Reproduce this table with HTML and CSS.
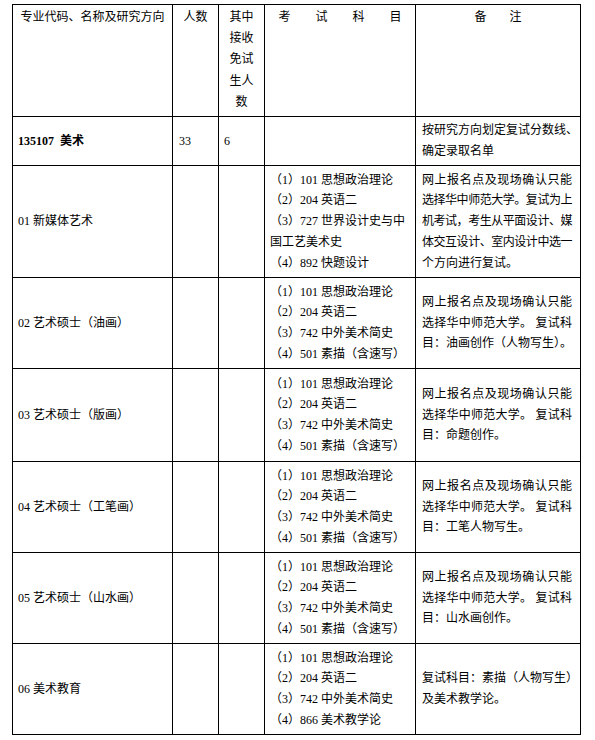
FILE: index.html
```html
<!DOCTYPE html>
<html lang="zh-CN">
<head>
<meta charset="utf-8">
<title>招生专业目录</title>
<link rel="stylesheet" href="styles.css">
</head>
<body>
<div class="tbl">
  <div class="c h"><span class="h1">专业代码、名称及研究方向</span></div>
  <div class="c h">人数</div>
  <div class="c h">其中<br>接收<br>免试<br>生人<br>数</div>
  <div class="c h"><span class="sp4">考试科目</span></div>
  <div class="c h"><span class="sp2">备注</span></div>

  <div class="c m p1"><b>135107&nbsp; 美术</b></div>
  <div class="c m p2">33</div>
  <div class="c m p3">6</div>
  <div class="c m p4"></div>
  <div class="c m p5"><div class="txt"><span class="ln nw">按研究方向划定复试分数线、</span><span class="ln">确定录取名单</span></div></div>

  <div class="c m p1">01 新媒体艺术</div>
  <div class="c m p2"></div>
  <div class="c m p3"></div>
  <div class="c m p4"><div>（1）101 思想政治理论<br>（2）204 英语二<br>（3）727 世界设计史与中<br>国工艺美术史<br>（4）892 快题设计</div></div>
  <div class="c m p5"><div class="txt"><span class="ln j">网上报名点及现场确认只能</span><span class="ln j t">选择华中师范大学。复试为上</span><span class="ln j t">机考试，考生从平面设计、媒</span><span class="ln j t">体交互设计、室内设计中选一</span><span class="ln">个方向进行复试。</span></div></div>

  <div class="c m p1">02 艺术硕士（油画）</div>
  <div class="c m p2"></div>
  <div class="c m p3"></div>
  <div class="c m p4"><div>（1）101 思想政治理论<br>（2）204 英语二<br>（3）742 中外美术简史<br>（4）501 素描（含速写）</div></div>
  <div class="c m p5"><div class="txt"><span class="ln j">网上报名点及现场确认只能</span><span class="ln j">选择华中师范大学。 复试科</span><span class="ln nw">目：油画创作（人物写生）。</span></div></div>

  <div class="c m p1">03 艺术硕士（版画）</div>
  <div class="c m p2"></div>
  <div class="c m p3"></div>
  <div class="c m p4"><div>（1）101 思想政治理论<br>（2）204 英语二<br>（3）742 中外美术简史<br>（4）501 素描（含速写）</div></div>
  <div class="c m p5"><div class="txt"><span class="ln j">网上报名点及现场确认只能</span><span class="ln j">选择华中师范大学。 复试科</span><span class="ln">目：命题创作。</span></div></div>

  <div class="c m p1">04 艺术硕士（工笔画）</div>
  <div class="c m p2"></div>
  <div class="c m p3"></div>
  <div class="c m p4"><div>（1）101 思想政治理论<br>（2）204 英语二<br>（3）742 中外美术简史<br>（4）501 素描（含速写）</div></div>
  <div class="c m p5"><div class="txt"><span class="ln j">网上报名点及现场确认只能</span><span class="ln j">选择华中师范大学。 复试科</span><span class="ln">目：工笔人物写生。</span></div></div>

  <div class="c m p1">05 艺术硕士（山水画）</div>
  <div class="c m p2"></div>
  <div class="c m p3"></div>
  <div class="c m p4"><div>（1）101 思想政治理论<br>（2）204 英语二<br>（3）742 中外美术简史<br>（4）501 素描（含速写）</div></div>
  <div class="c m p5"><div class="txt"><span class="ln j">网上报名点及现场确认只能</span><span class="ln j">选择华中师范大学。 复试科</span><span class="ln">目：山水画创作。</span></div></div>

  <div class="c m p1">06 美术教育</div>
  <div class="c m p2"></div>
  <div class="c m p3"></div>
  <div class="c m p4"><div>（1）101 思想政治理论<br>（2）204 英语二<br>（3）742 中外美术简史<br>（4）866 美术教学论</div></div>
  <div class="c m p5"><div class="txt"><span class="ln nw">复试科目：素描（人物写生）</span><span class="ln">及美术教学论。</span></div></div>
</div>
</body>
</html>
```

FILE: styles.css
```css
html, body {
  margin: 0;
  padding: 0;
  background: #fff;
}

body {
  font-family: "Liberation Serif", "Noto Sans CJK SC", serif;
  font-size: 12px;
  color: #000;
}

.tbl {
  display: grid;
  grid-template-columns: 160px 46px 46px 151px 165px;
  grid-template-rows: 112px 49px 112px 91px 93px 91px 91px 91px;
  border-left: 1px solid #000;
  border-top: 1px solid #000;
  width: max-content;
  margin: 4px 0 0 12px;
}

.c {
  box-sizing: border-box;
  border-right: 1px solid #000;
  border-bottom: 1px solid #000;
  line-height: 20.7px;
}

.h {
  text-align: center;
  padding-top: 2px;
  line-height: 21.2px;
}

.h1 {
  white-space: nowrap;
}

.sp4 {
  letter-spacing: 25px;
  margin-right: -25px;
}

.sp2 {
  letter-spacing: 23px;
  margin-right: -23px;
}

.m {
  display: flex;
  align-items: center;
}

.p1 { padding-left: 5px; }
.p2 { padding-left: 6px; }
.p3 { padding-left: 5px; }
.p4 { padding-left: 5px; }
.p5 { padding-left: 6px; }

.txt {
  width: 150px;
}

.ln {
  display: block;
}

.j {
  text-align: justify;
  text-align-last: justify;
}

.t {
  letter-spacing: -0.5px;
}

.nw {
  white-space: nowrap;
}

b {
  font-weight: 700;
}
```
